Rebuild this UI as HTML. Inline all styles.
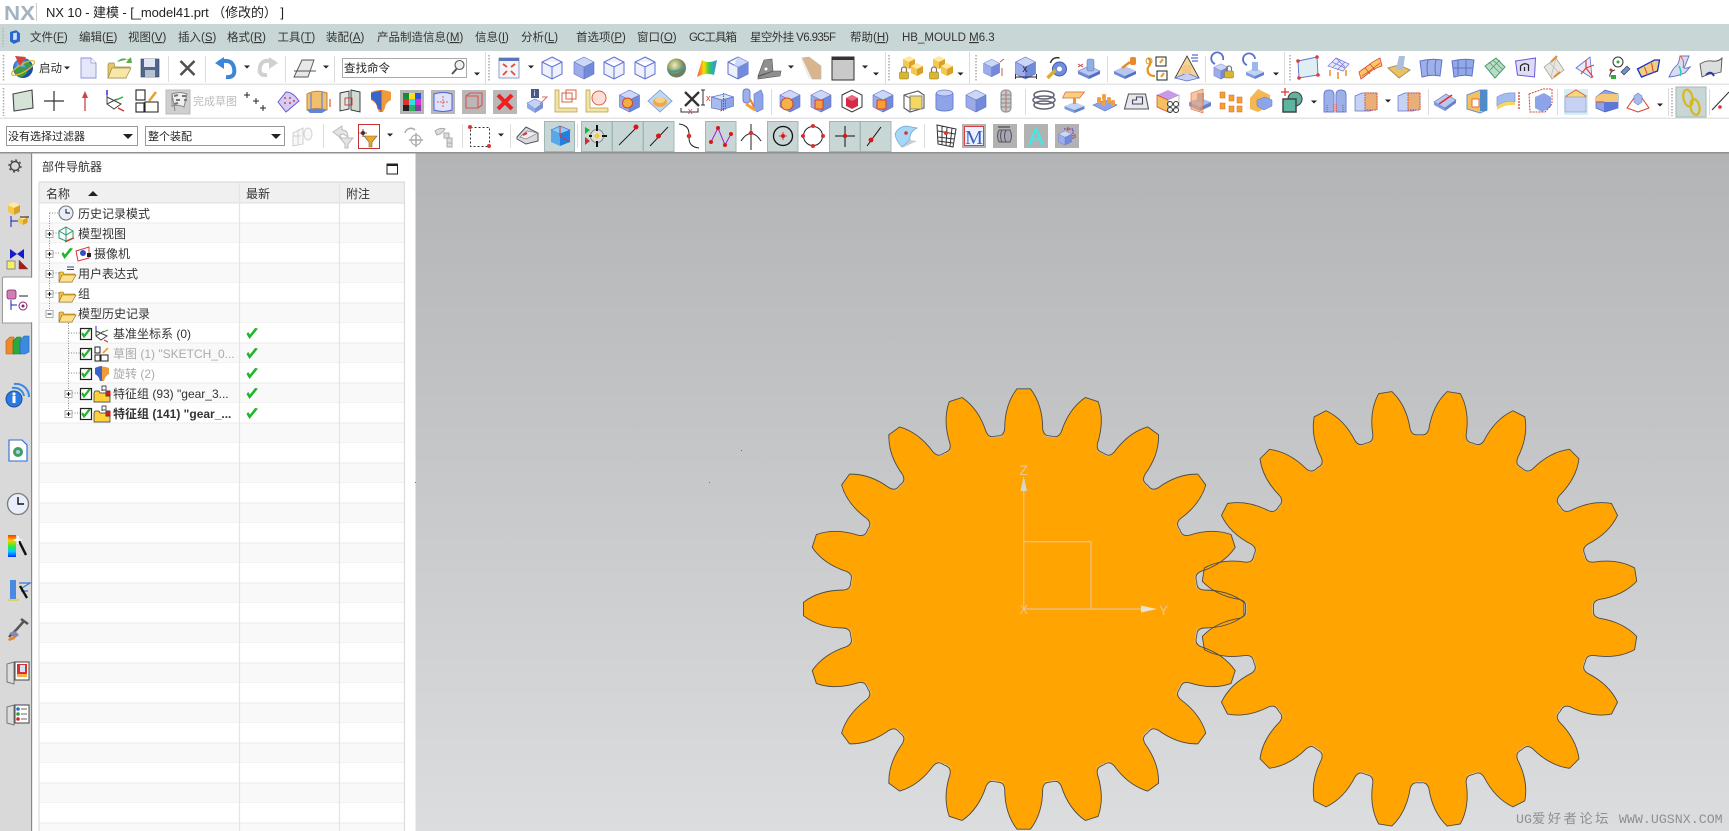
<!DOCTYPE html>
<html lang="zh"><head><meta charset="utf-8"><title>NX 10</title>
<style>
html,body{margin:0;padding:0;width:1729px;height:831px;overflow:hidden;background:#fff}
svg{display:block;font-family:"Liberation Sans","Noto Sans CJK SC",sans-serif}
.m{font-size:11.5px;fill:#333}
.t{font-size:12px;fill:#333}
.g{fill:#aaa}
</style></head><body>
<svg width="1729" height="831" viewBox="0 0 1729 831" xmlns="http://www.w3.org/2000/svg">
<defs>
<linearGradient id="vp" x1="0" y1="0" x2="0" y2="1"><stop offset="0" stop-color="#b3b4b6"/><stop offset="1" stop-color="#dcddde"/></linearGradient>
<linearGradient id="rb" x1="0" y1="0" x2="1" y2="0"><stop offset="0" stop-color="#f44"/><stop offset=".35" stop-color="#fd0"/><stop offset=".6" stop-color="#3c5"/><stop offset="1" stop-color="#38f"/></linearGradient>
<linearGradient id="rbv" x1="0" y1="0" x2="0" y2="1"><stop offset="0" stop-color="#f30"/><stop offset=".25" stop-color="#fc0"/><stop offset=".5" stop-color="#3e3"/><stop offset=".75" stop-color="#0cf"/><stop offset="1" stop-color="#03f"/></linearGradient>
<radialGradient id="sp" cx=".4" cy=".35"><stop offset="0" stop-color="#efe9c8"/><stop offset=".6" stop-color="#9fae6a"/><stop offset="1" stop-color="#6f7d60"/></radialGradient>
<radialGradient id="ea" cx=".4" cy=".35"><stop offset="0" stop-color="#7fc8f5"/><stop offset=".7" stop-color="#2a74d0"/><stop offset="1" stop-color="#1d4fa8"/></radialGradient>
<g id="c"><polygon points="0,-11 10,-6 0,-1 -10,-6" fill="#ccd6f5"/><polygon points="-10,-6 0,-1 0,11 -10,6" fill="#9bace9"/><polygon points="10,-6 0,-1 0,11 10,6" fill="#7389da"/><path d="M0-11 10-6V6L0 11-10 6V-6ZM-10-6 0-1 10-6M0-1V11" fill="none" stroke="#5f73c8" stroke-width=".6"/></g>
<g id="w"><path d="M0-11 10-6V6L0 11-10 6V-6ZM-10-6 0-1 10-6M0-1V11" fill="#eef0fb" stroke="#5a6fd0" stroke-width="1"/></g>
<polygon id="dd" points="-3,-1.5 3,-1.5 0,1.5" fill="#222"/>
<path id="sf" d="M-11-7Q0-10 11-8L9 8Q0 6-9 9Z"/>
<path id="pl" d="M-10-7 9-11 10 7-9 10Z"/>
<g id="y"><polygon points="-6,-6 0,-9 6,-6 0,-3" fill="#ffe9a0"/><polygon points="-6,-6 0,-3 0,4 -6,1" fill="#f5c84b"/><polygon points="6,-6 0,-3 0,4 6,1" fill="#d9a02a"/></g>
<g id="lk"><rect x="-4.5" y="-2" width="9" height="7" rx="1" fill="#d8b62f" stroke="#8a7320" stroke-width=".5"/><path d="M-2.5-2V-4.5A2.5 2.5 0 0 1 2.5-4.5V-2" fill="none" stroke="#777" stroke-width="1.2"/></g>
<path id="ck" d="M-5.5 0-2.5 5 6-5.5 3-6-2 .5-3.8-2Z" fill="#1fb52d"/>
<g id="cb"><rect x="-5.5" y="-5.5" width="11" height="11" fill="#fff" stroke="#222" stroke-width="1.2"/><use href="#ck" transform="scale(.85)"/></g>
<g id="fo"><path d="M-8-2V7H5L8-1H-3L-4-3H-7Z" fill="#f5c23f" stroke="#8b6414" stroke-width=".6"/><path d="M-8 7-5 0H9L5 7Z" fill="#ffe08a" stroke="#8b6414" stroke-width=".6"/></g>
<g id="pb"><rect x="-3.5" y="-3.5" width="7" height="7" fill="#fff" stroke="#999" stroke-width=".8"/><path d="M-2 0H2M0-2V2" stroke="#111" stroke-width="1"/></g>
<g id="mb"><rect x="-3.5" y="-3.5" width="7" height="7" fill="#fff" stroke="#999" stroke-width=".8"/><path d="M-2 0H2" stroke="#111" stroke-width="1"/></g>
<g id="fg"><path d="M-8-2V7H8V-2H-2L-3-4H-7Z" fill="#ffd23c" stroke="#333" stroke-width=".7"/><path d="M0-4V-9H4V-5H0M4-4H8V1H4Z" fill="#fff" stroke="#111" stroke-width=".7"/><rect x="4.5" y="-3.5" width="4" height="4" fill="#e11"/></g>
<path id="tooth" d="M-27.4-173C-22.500-173-19.800-174.500-19-180C-19-192-17-207-6.700-220.200L6.700-220.200C17-207 19-192 19-180C19.800-174.500 22.500-173 27.400-173"/>
<g id="teeth"><use href="#tooth"/><use href="#tooth" transform="rotate(18)"/><use href="#tooth" transform="rotate(36)"/><use href="#tooth" transform="rotate(54)"/><use href="#tooth" transform="rotate(72)"/><use href="#tooth" transform="rotate(90)"/><use href="#tooth" transform="rotate(108)"/><use href="#tooth" transform="rotate(126)"/><use href="#tooth" transform="rotate(144)"/><use href="#tooth" transform="rotate(162)"/><use href="#tooth" transform="rotate(180)"/><use href="#tooth" transform="rotate(198)"/><use href="#tooth" transform="rotate(216)"/><use href="#tooth" transform="rotate(234)"/><use href="#tooth" transform="rotate(252)"/><use href="#tooth" transform="rotate(270)"/><use href="#tooth" transform="rotate(288)"/><use href="#tooth" transform="rotate(306)"/><use href="#tooth" transform="rotate(324)"/><use href="#tooth" transform="rotate(342)"/></g>
<pattern id="rows" x="39" y="203" width="366" height="40" patternUnits="userSpaceOnUse"><rect width="366" height="40" fill="#fff"/><rect y="20" width="366" height="20" fill="#f9f9f9"/><rect y="19.5" width="366" height="1" fill="#ebebeb"/><rect y="39.5" width="366" height="1" fill="#ebebeb"/></pattern>
</defs>

<!-- title / menu -->
<rect width="1729" height="153" fill="#fff"/>
<text x="4" y="20" font-size="20" font-weight="700" fill="#a4b3bf" textLength="31" lengthAdjust="spacingAndGlyphs">NX</text>
<rect x="36" y="3" width="1" height="18" fill="#ccc"/>
<text x="46" y="17" font-size="13" fill="#222" textLength="238">NX 10 - 建模 - [_model41.prt （修改的） ]</text>
<rect y="24" width="1729" height="27" fill="#c8d7d5"/>
<path d="M3 28V47" stroke="#98a8a8" stroke-dasharray="1.5 1.5" fill="none"/>
<g transform="translate(15,37) scale(.62)"><polygon points="-8,-8 2,-11 8,-6 8,7 -2,11 -8,7" fill="#2b66c9"/><polygon points="-3,-6 3,-7 3,4 -3,5" fill="#cfe0fa"/></g>
<g class="m">
<text class="m" x="30" y="41">文件(<tspan text-decoration="underline">F</tspan>)</text>
<text class="m" x="79" y="41">编辑(<tspan text-decoration="underline">E</tspan>)</text>
<text class="m" x="128" y="41">视图(<tspan text-decoration="underline">V</tspan>)</text>
<text class="m" x="178" y="41">插入(<tspan text-decoration="underline">S</tspan>)</text>
<text class="m" x="227" y="41">格式(<tspan text-decoration="underline">R</tspan>)</text>
<text class="m" x="277.5" y="41">工具(<tspan text-decoration="underline">T</tspan>)</text>
<text class="m" x="326" y="41">装配(<tspan text-decoration="underline">A</tspan>)</text>
<text class="m" x="377" y="41">产品制造信息(<tspan text-decoration="underline">M</tspan>)</text>
<text class="m" x="475" y="41">信息(<tspan text-decoration="underline">I</tspan>)</text>
<text class="m" x="521" y="41">分析(<tspan text-decoration="underline">L</tspan>)</text>
<text class="m" x="576" y="41">首选项(<tspan text-decoration="underline">P</tspan>)</text>
<text class="m" x="637" y="41">窗口(<tspan text-decoration="underline">O</tspan>)</text>
<text class="m" x="689" y="41" textLength="48">GC工具箱</text>
<text class="m" x="750" y="41" textLength="86">星空外挂 V6.935F</text>
<text class="m" x="850" y="41">帮助(<tspan text-decoration="underline">H</tspan>)</text>
<text class="m" x="902" y="41">HB_MOULD <tspan text-decoration="underline">M</tspan>6.3</text>
</g>

<!-- row separators -->
<rect y="83.5" width="1729" height="1.5" fill="#e4e4e4"/>
<rect y="117.5" width="1729" height="1.5" fill="#e4e4e4"/>
<path d="M3.5 55V82M3.5 88V116M489 55V82M889 55V82M976 55V82M1290 55V82M1672 88V116" stroke="#a8a8a8" stroke-width="1.5" stroke-dasharray="1.5 1.5" fill="none"/>
<path d="M168.500 56V82M205.500 56V82M285.500 56V82M334.500 56V82M485.500 52V84M885.500 52V84M969.500 52V84M1107.500 56V82M1205.500 56V82M1284.500 52V84M771.500 89V115M1025.500 89V115M1428.500 89V115M1557.500 89V115M1668.500 88V116M1709.500 89V115M323.500 124V148M462.500 124V148M510.500 124V148M577.500 124V148M924.500 124V148" stroke="#dcdcdc" stroke-width="1"/>

<!-- row 1 -->
<g transform="translate(23,68)"><circle r="10" fill="url(#ea)"/><path d="M-9 3Q-4-4 2 0T-1 9Q-7 9-9 3ZM3-8 9-3 5 1 1-3Z" fill="#3f9b3f"/><ellipse rx="13" ry="4" transform="rotate(-30)" fill="none" stroke="#e8b830" stroke-width="1.3"/><polygon points="-8,-12 3,-11 -3,-2" fill="#d8403a"/></g>
<text class="m" x="39" y="72">启动</text><use href="#dd" x="67" y="68"/>
<g transform="translate(88,68)"><path d="M-7-10H3L8-5V10H-7Z" fill="#e4e6fa" stroke="#8d95d6" stroke-width=".9"/><path d="M3-10V-5H8" fill="#fff" stroke="#8d95d6" stroke-width=".8"/></g>
<g transform="translate(119,68)"><path d="M-11-3V10H7L11-1H-4L-5-5H-10Z" fill="#e6c66b" stroke="#a08a3c" stroke-width=".7"/><path d="M-11 10-7 0H12L7 10Z" fill="#f6e6a8" stroke="#a08a3c" stroke-width=".7"/><path d="M-2-6Q3-12 9-8L7-5 13-5 12-11 10-9" fill="#5fae4a"/></g>
<g transform="translate(150,68)"><rect x="-9" y="-9" width="18" height="18" fill="#4f668f" stroke="#2f3f60" stroke-width=".6"/><rect x="-6" y="-9" width="11" height="8" fill="#dfe6f3"/><rect x="-5" y="2" width="10" height="7" fill="#b7c0cf"/></g>
<path d="M180.500 61 194.500 75M194.500 61 180.500 75" stroke="#505050" stroke-width="2.6"/>
<g fill="none" stroke-width="4"><path d="M219 62Q232 58 234 68T226 77" stroke="#3c86d6"/><path d="M274 62Q262 58 260 67T267 75" stroke="#d0d0d0"/></g>
<polygon points="215,63 224,57 224,69" fill="#3c86d6"/><polygon points="278,63 269,57 269,69" fill="#d0d0d0"/>
<use href="#dd" x="247" y="67"/>
<g transform="translate(305,68)" stroke="#555" stroke-width=".9" fill="#e8e8e8"><path d="M-11 9-3-8H9L3 9Z"/><path d="M-11 3H11" fill="none"/></g><use href="#dd" x="326" y="67"/>
<rect x="342.500" y="58.500" width="124" height="19" fill="#fff" stroke="#aaa"/>
<text x="344" y="72" font-size="11.500" fill="#222">查找命令</text>
<g transform="translate(458,67)" fill="none" stroke="#555"><circle cx="1.500" cy="-2" r="4.500" fill="#eee" stroke-width="1.100"/><path d="M-1.500 2-6 7" stroke-width="2"/></g>
<use href="#dd" x="477" y="74"/>
<g transform="translate(509,68)"><rect x="-10" y="-10" width="20" height="20" fill="#f3f5fb" stroke="#8da0c8"/><rect x="-10" y="-10" width="20" height="3" fill="#5876c0"/><path d="M-6-4-2-1M6-4 2-1M-6 7-2 3M6 7 2 3" stroke="#e05030" stroke-width="1.800"/></g><use href="#dd" x="531" y="67"/>
<use href="#w" x="552" y="68"/><use href="#c" x="584" y="68"/><use href="#w" x="614" y="68"/><use href="#w" x="645" y="68"/>
<circle cx="676.500" cy="68" r="9.500" fill="url(#sp)"/><path d="M668 70Q675 74 685 67" stroke="#3d9ea0" stroke-width="2" fill="none"/>
<path d="M697 77 702 60Q708 64 717 60L714 75Q705 72 697 77Z" fill="url(#rb)"/>
<g transform="translate(738,68)"><use href="#w"/><polygon points="0,-1 10,-6 10,6 0,11" fill="#7389da"/><polygon points="0,-11 10,-6 0,-1 -4,-3" fill="#ccd6f5"/></g>
<g transform="translate(769,68)"><path d="M-11 8-5-8 3-9 4 3-11 9ZM4 3 12 3 11 8-11 11-11 8Z" fill="#8f8f8f" stroke="#555" stroke-width=".6"/><circle cx="-3" cy="1" r="1.500" fill="#fff"/></g><use href="#dd" x="791" y="67"/>
<g transform="translate(812,68)"><polygon points="-10,-10 -3,-11 9,-2 9,11 0,11" fill="#d8b58a" stroke="#bbb" stroke-width=".7"/><polygon points="-10,-10 0,11 -3,11 -11,-8" fill="#eee"/></g>
<rect x="832" y="57" width="22" height="23" fill="#c9c9c9" stroke="#333"/><rect x="832" y="57" width="22" height="3" fill="#333"/><use href="#dd" x="865" y="67"/><use href="#dd" x="876" y="74"/>
<g transform="translate(909,68)"><use href="#y" y="-3"/><use href="#y" x="8" y="4"/><use href="#lk" x="-5" y="6"/></g>
<g transform="translate(939,68)"><use href="#y" y="-3"/><use href="#y" x="8" y="4"/><use href="#lk" x="-5" y="6"/></g><use href="#dd" x="960.500" y="74"/>
<g transform="translate(994,68)"><use href="#c" transform="scale(.8)" x="-3"/><path d="M6-6 10-9M8 0V8" stroke="#c55" stroke-width="1" fill="none"/></g>
<g transform="translate(1025.500,68)"><use href="#c"/><path d="M-10 9H11M-10 6V11M11 6V11" stroke="#222" fill="none" stroke-width=".9"/><text x="-3" y="4" font-size="10" fill="#223">x</text></g>
<g transform="translate(1056.500,68)"><circle cx="3" cy="1" r="7" fill="#6f8ed8" stroke="#3f5ab0"/><circle cx="3" cy="1" r="2.500" fill="#fff"/><path d="M-9 10-1 2" stroke="#d8b030" stroke-width="3.500"/><path d="M-6-5A7 7 0 0 1 3-10" stroke="#333" fill="none" stroke-width="1.500"/></g>
<g transform="translate(1089,68)"><polygon points="-11,3 0,-2 11,3 0,8" fill="#b9c6ee" stroke="#6d82d4" stroke-width=".6"/><polygon points="-11,3 0,8 0,11 -11,6" fill="#6e8ad6"/><polygon points="11,3 0,8 0,11 11,6" fill="#4f6fc4"/><rect x="-2" y="-9" width="7" height="12" rx="2" fill="#8fb0e4" stroke="#5b7cc8" stroke-width=".6"/><path d="M-11-4-6-1M-11-1-6-4" stroke="#c44"/></g>
<g transform="translate(1125,68)"><polygon points="-11,3 0,-2 11,3 0,8" fill="#b9c6ee"/><polygon points="-11,3 0,8 0,11 -11,6" fill="#6e8ad6"/><polygon points="11,3 0,8 0,11 11,6" fill="#4f6fc4"/><path d="M-3 0 5-6" stroke="#e88a2a" stroke-width="2.500"/><rect x="5" y="-11" width="6" height="8" rx="2" fill="#e88a2a"/></g>
<g transform="translate(1155,68)"><rect x="1" y="-11" width="10" height="9" fill="#fff" stroke="#222"/><rect x="2" y="3" width="10" height="9" fill="#fff" stroke="#222"/><path d="M-7-10A4 5 0 0 1-7-1M-7-1Q-9 8 0 8" fill="none" stroke="#e89020" stroke-width="2.200"/><path d="M8-9 5-5M9 5 6 9" stroke="#d8a030" stroke-width="2"/><circle cx="-6" cy="-7" r="3" fill="none" stroke="#c8a030"/></g>
<g transform="translate(1187,68)"><polygon points="0,-12 12,10 -12,10" fill="#f4d49a" stroke="#333" stroke-width=".8"/><polygon points="-12,10 0,5 12,10 0,13" fill="#c7d0f0" stroke="#5a6fd0" stroke-width=".7"/><rect x="-5" y="-3" width="9" height="9" fill="#f3c885"/><path d="M4-10H11M5-7H11M5-13H11" stroke="#3344bb" stroke-width=".9"/></g>
<g transform="translate(1223,68)"><use href="#c" transform="scale(.7)" x="-3" y="5"/><path d="M-8-4A6 6 0 1 1 0-8" fill="none" stroke="#5a6fd0" stroke-width="1.800"/><use href="#lk" x="6" y="5"/></g>
<g transform="translate(1255,68)"><polygon points="-9,4 0,0 9,4 0,8" fill="#c3d3f2"/><polygon points="-9,4 0,8 0,11 -9,7" fill="#7f9ade"/><polygon points="9,4 0,8 0,11 9,7" fill="#6283cc"/><rect x="-3" y="-6" width="6" height="9" fill="#9db8e8"/><path d="M-8-3A6 6 0 1 1 0-9" fill="none" stroke="#5a6fd0" stroke-width="1.800"/></g><use href="#dd" x="1276" y="74"/>
<g transform="translate(1308,68)"><use href="#pl" fill="#dfeef3" stroke="#5a6fd0" stroke-width=".9"/><g fill="#d8403a"><circle cx="-10" cy="-7" r="1.800"/><circle cx="9" cy="-11" r="1.800"/><circle cx="10" cy="7" r="1.800"/><circle cx="-9" cy="10" r="1.800"/></g></g>
<g transform="translate(1338,68)"><path d="M-10-2-2-10 11-4 5 3ZM-6-6 7 0M-2-10 7-1M3-8-5-1M7-6-1 2" fill="#e8e8fb" stroke="#7a7fe0" stroke-width=".8"/><path d="M-8 2V8M0 4V11M8 2V8" stroke="#e89020" stroke-width="1.500"/></g>
<g transform="translate(1370,68)"><path d="M-11 4Q-4-1 0-4T10-10L12-2Q5 0 0 4T-9 11Z" fill="#f8c86a" stroke="#e0503a" stroke-width=".9"/><path d="M-8 8Q0 3 10-5M-5 0 0 6M0-4 5 2" stroke="#d04030" fill="none" stroke-width=".7"/></g>
<g transform="translate(1399,68)"><polygon points="-11,0 0,-3 11,2 0,10" fill="#e9c264" stroke="#a89060"/><polygon points="0,-12 6,-12 4,2 -3,2" fill="#aac0d8"/></g>
<use href="#sf" x="1431" y="68" fill="#9db0e8" stroke="#5f73c8"/><path d="M1428 60Q1426 68 1428 76M1436 60Q1434 68 1436 75" stroke="#5f73c8" fill="none"/>
<use href="#sf" x="1463" y="68" fill="#93a8e6" stroke="#5f73c8"/><path d="M1458 60V75M1466 60V75M1453 68H1473" stroke="#5f73c8" fill="none"/>
<path d="M1485 66 1496 58 1505 67 1495 78Z" fill="#b8dcc4" stroke="#4a9a70"/><path d="M1489 62 1500 73M1493 60 1503 70M1490 70 1500 60" stroke="#4a9a70" stroke-width=".7"/>
<g transform="translate(1525.500,68)"><path d="M-10-7 10-10 9 9-8 7Z" fill="#dcdcf8" stroke="#6a5ad8"/><path d="M-5 3V-2Q-1-6 3-3V3M-1 3V-1" fill="none" stroke="#222" stroke-width="1.200"/></g>
<g transform="translate(1554,68)"><polygon points="-10,-1 2,-10 10,2 -2,11" fill="#e8e6e0" stroke="#999" stroke-width=".7"/><path d="M-9 0-3 9M2-10 -3 9M-4-5 6 6" stroke="#bbb" stroke-width=".7"/><path d="M-3-6 3-12M0 9 6 4" stroke="#e88a2a" stroke-width="2"/></g>
<g transform="translate(1586,68)"><polygon points="-10,0 4,-11 6,10" fill="#e8eaf6" stroke="#5a6fd0" stroke-width=".8"/><path d="M0 0V-8M0 0 8 -3M0 0-5 6M0 0 7 9" stroke="#d8403a" stroke-width="1.200"/></g>
<g transform="translate(1618,68)"><circle cx="0" cy="-6" r="5" fill="#fff" stroke="#333"/><circle cy="-6" r="1.500" fill="#3a3"/><path d="M-8 9A6 6 0 0 1-3 2" fill="none" stroke="#333"/><circle cx="-7" cy="2" r="1.500" fill="#d33"/><polygon points="3,4 9,-2 12,1 6,7" fill="#6f8ed8" stroke="#333" stroke-width=".6"/><rect x="-7" y="7" width="5" height="4" fill="#3a3"/></g>
<g transform="translate(1648.500,68)"><polygon points="-11,1 6,-8 11,-8 9,3 -7,9" fill="#f0d080" stroke="#1a30c0" stroke-width="1.300"/><path d="M-4-1-1 7M3-5 5 5" stroke="#d8403a"/></g>
<g transform="translate(1680,68)"><path d="M-11 9Q-7 0-4-2T0-12H9L5-2Q2 2 10-1L5 5-4 8Z" fill="#d8dcf0" stroke="#6a78c8"/><path d="M-1-2Q2 4 0 8" stroke="#3cb" fill="none" stroke-width="1.500"/><path d="M0-12Q5-8 3 0" stroke="#e06050" fill="none"/></g>
<g transform="translate(1711,68)"><path d="M-11-4Q-5-8 1-7T11-10L10 4Q4 6-2 6L-9 9Z" fill="#ddd" stroke="#555" stroke-width=".9"/><path d="M-5 7Q0 2 3 8" stroke="#223ca0" stroke-width="2" fill="none"/></g>

<!-- row 2 -->
<g transform="translate(23,101)"><use href="#pl" fill="#d5e3d7" stroke="#444" stroke-width="1.100"/></g>
<path d="M54 91V111M44 101H64" stroke="#333" stroke-width="1.200"/>
<path d="M85 93V111" stroke="#c44" stroke-width="1.300"/><polygon points="85,91 82,98 88,98" fill="#c44"/>
<g transform="translate(115,101)" fill="none"><path d="M-8-4 6 3-1 8-8 3ZM-8-9V3M-8 3 2-2" stroke="#444"/><path d="M-8-11V-6" stroke="#22c" stroke-width="1.400"/><path d="M1-1 8-4" stroke="#3a3" stroke-width="1.400"/><path d="M3 7 9 10" stroke="#c33" stroke-width="1.400"/></g>
<g transform="translate(147,101)" fill="#fff" stroke="#222" stroke-width="1.100"><rect x="-11" y="-11" width="9" height="10"/><rect x="-11" y="2" width="8" height="9"/><path d="M-2 11V1H11V11Z"/><path d="M2 0 9-9" stroke="#e8a030" stroke-width="2.500"/></g>
<rect x="166" y="90" width="24" height="24" fill="#cfcfcf" stroke="#bbb"/><path d="M172 94Q180 91 187 94L184 107Q178 104 172 106Z" fill="#eee" stroke="#888"/><path d="M174 96 178 95M182 96 186 96M176 100H180M184 100H187M174 104 178 103" stroke="#777" stroke-width="2"/><path d="M172 94 175 111" stroke="#888"/>
<text x="193" y="105" font-size="11" fill="#bbb">完成草图</text>
<path d="M247 92V98M244 95H250M256 98V104M253 101H259M263 105V111M260 108H266" stroke="#222" fill="none"/>
<g transform="translate(288,101)"><path d="M-10 1-2-9Q5-9 11 0-2 11-2 11Z" fill="#d3ccf4" stroke="#6a5ad8"/><g fill="#d8403a"><circle cx="-3" cy="-3" r="1"/><circle cx="2" cy="-3" r="1"/><circle cx="-3" cy="2" r="1"/><circle cx="2" cy="2" r="1"/><circle cx="6" cy="0" r="1"/></g></g>
<g transform="translate(318,101)"><path d="M-11-7Q-2-12 9-8V9Q-2 6-11 9Z" fill="#f2bf6a" stroke="#c9802a"/><path d="M-7-8V8M4-9V8" stroke="#6f8ed8" stroke-width="1.400"/><path d="M-11 9Q-2 6 9 9L4 12H-8Z" fill="#5f84d8"/><path d="M12-2V6" stroke="#c33"/></g>
<g transform="translate(350,101)" stroke="#333" stroke-width=".9"><path d="M-10-8-1-10V8L-10 10Z" fill="#dfe8e2"/><path d="M1-11 10-9V11L1 9Z" fill="#cfdad2"/><rect x="-5" y="-3" width="7" height="7" fill="none" stroke="#c33"/></g>
<g transform="translate(381,101)"><path d="M-10-9Q0-13 10-9V-1Q4 2 4 7L2 11H-2L-4 7Q-4 2-10-1Z" fill="#f09a3a"/><path d="M0-11V11" stroke="#c33"/><path d="M-10-8Q-5-10 0-10V9L-3 8Q-4 1-10-2Z" fill="#3a64c8"/></g>
<rect x="400" y="90" width="24" height="24" fill="#b5b5b5"/><g stroke="none"><rect x="403" y="93" width="6" height="6" fill="#1a8a3a"/><rect x="409" y="93" width="6" height="6" fill="#ffe020"/><rect x="415" y="93" width="6" height="6" fill="#3050e0"/><rect x="403" y="99" width="6" height="6" fill="#e03030"/><rect x="409" y="99" width="6" height="6" fill="#30e0e0"/><rect x="415" y="99" width="6" height="6" fill="#e030d0"/><rect x="403" y="105" width="6" height="6" fill="#222"/><rect x="409" y="105" width="6" height="6" fill="#30b060"/><rect x="415" y="105" width="6" height="6" fill="#8040a0"/></g>
<rect x="431" y="90" width="24" height="24" fill="#b8b8b8"/><path d="M434 94Q443 91 452 94V110Q443 113 434 110Z" fill="#dfe4fa" stroke="#5060e0"/><path d="M437 102H449M443 96V108" stroke="#e06060" stroke-dasharray="2 1"/>
<rect x="462" y="90" width="24" height="24" fill="#b8b8b8"/><path d="M466 96H478V108H466ZM466 96 470 93H482V105L478 108" fill="none" stroke="#e05050" stroke-width="1.100"/>
<rect x="493" y="90" width="24" height="24" fill="#b8b8b8"/><path d="M498 95 512 109M512 95 498 109" stroke="#ee2020" stroke-width="4"/>
<g transform="translate(535,101)"><polygon points="-8,2 0,-2 8,2 0,8" fill="#c3d3f2" stroke="#6d82d4" stroke-width=".6"/><polygon points="-8,2 0,8 0,12 -8,7" fill="#90a8e6"/><polygon points="8,2 0,8 0,12 8,7" fill="#7590d8"/><rect x="-4" y="-12" width="8" height="9" fill="#4a5888"/><text x="-1.500" y="-5" font-size="8" fill="#fff">i</text><path d="M5 3 12-4H7" stroke="#d66" fill="none"/></g>
<g transform="translate(566,101)"><path d="M-11-11H-7V7H11V11H-11Z" fill="#f0e4a8" stroke="#b89840" stroke-width=".7"/><rect x="-4" y="-8" width="10" height="9" fill="none" stroke="#d86040"/><rect x="0" y="-11" width="10" height="9" fill="none" stroke="#d86040"/></g>
<g transform="translate(597,101)"><path d="M-11-11H-7V7H11V11H-11Z" fill="#f0e4a8" stroke="#b89840" stroke-width=".7"/><circle cx="2" cy="-3" r="7" fill="#fce0d8" stroke="#d86040"/></g>
<g transform="translate(629.500,101)"><use href="#c"/><circle cx="-2" cy="2" r="5" fill="#f0b040" stroke="#d84030"/></g>
<g transform="translate(660,101)"><polygon points="-12,0 0,-11 12,0 0,11" fill="#c0d8f4" stroke="#88a8d8"/><ellipse cy="1" rx="7" ry="5" fill="#f0a848"/><ellipse cy="-1" rx="5" ry="3" fill="#f8d088"/></g>
<g transform="translate(692,101)"><path d="M-7-9 7 5M7-9-7 5" stroke="#333" stroke-width="2.300"/><path d="M-11 7V11H6V7" fill="none" stroke="#333"/><path d="M9-11H13M11-11V4M9 4H13" stroke="#333" fill="none"/><text x="-4" y="13" font-size="9" fill="#d33">x</text><text x="10" y="0" font-size="9" fill="#d33" transform="translate(4 0)">x</text></g>
<g transform="translate(722.500,101)"><polygon points="-11,-4 2,-7 11,-4 -1,-1" fill="#dce4f8" stroke="#5f73c8" stroke-width=".7"/><polygon points="-11,-4 -1,-1 -1,9 -11,7" fill="#a9bbee" stroke="#5f73c8" stroke-width=".7"/><polygon points="11,-4 -1,-1 -1,9 11,5" fill="#8ea4e8" stroke="#5f73c8" stroke-width=".7"/><path d="M1-8V10M-2 10 3 8V-2" stroke="#d33" stroke-dasharray="1.500 1" fill="none"/></g>
<g transform="translate(753,101)"><rect x="-10" y="-12" width="7" height="14" rx="3" fill="#9db0e8" stroke="#6a7fd4"/><path d="M-3-2 1 6" stroke="#f08030" stroke-width="2"/><polygon points="1,-7 8,-11 10,-6 10,8 4,11 1,8" fill="#8ea4e8" stroke="#6a7fd4" stroke-width=".7"/><path d="M-7 3 2 9" stroke="#f5a030" stroke-width="3"/></g>
<g transform="translate(790,101)"><use href="#c"/><circle cx="-3" cy="3" r="6" fill="#f3b34a" stroke="#d84030"/></g>
<g transform="translate(821,101)"><use href="#c"/><rect x="-6" y="-1" width="8" height="9" fill="#f0a040" stroke="#d84030"/></g>
<g transform="translate(852,101)"><path d="M-10-6 0-11 10-6V6L0 11-10 6Z" fill="#fff" stroke="#333"/><polygon points="-6,-3 0,-6 6,-3 6,5 0,8 -6,5" fill="#d82848"/><polygon points="-6,-3 0,-6 6,-3 0,0" fill="#e86880"/></g>
<g transform="translate(883,101)"><use href="#c"/><rect x="-6" y="-1" width="9" height="9" rx="1" fill="#f5a030" stroke="#d84030"/></g>
<g transform="translate(914,101)"><path d="M-10-6 4-10 10-6 10 7-4 11-10 7Z" fill="#fff" stroke="#555" stroke-width="1.100"/><rect x="-4" y="-5" width="12" height="13" fill="#f5d860" stroke="#888"/><path d="M-10-6-4-3V11" stroke="#666" fill="none"/></g>
<g transform="translate(944,101)"><rect x="-8" y="-10" width="17" height="20" rx="8" ry="3" fill="#8ea4e8" stroke="#6a7fd4"/><ellipse cy="-8" cx=".5" rx="8" ry="3" fill="#c6d2f4" stroke="#6a7fd4" stroke-width=".7"/></g>
<use href="#c" x="976" y="101"/>
<rect x="1001" y="90" width="10" height="22" rx="4" fill="#c8c8c8" stroke="#888"/><path d="M1001 95H1011M1001 99H1011M1001 103H1011M1001 107H1011M1006 90V112" stroke="#777" fill="none" stroke-width=".8"/><path d="M1006 90V112" stroke="#d66" stroke-dasharray="2 2"/>
<g transform="translate(1044,101)" fill="none" stroke="#667"><ellipse cy="-6" rx="10" ry="4" stroke-width="1.600"/><ellipse cy="-1" rx="11" ry="4" stroke-width="1.600"/><ellipse cy="4" rx="10" ry="4" stroke-width="1.600"/></g>
<g transform="translate(1074.500,101)"><polygon points="-9,-9 10,-9 5,-3 -12,-3" fill="#f8d080" stroke="#e06040" stroke-width=".7"/><polygon points="-10,5 0,1 10,5 0,9" fill="#c3d3f2"/><polygon points="-10,5 0,9 0,12 -10,8" fill="#7f9ade"/><polygon points="10,5 0,9 0,12 10,8" fill="#6283cc"/><path d="M0 3V-3" stroke="#f09030" stroke-width="3"/></g>
<g transform="translate(1105,101)"><polygon points="-12,4 0,-1 12,4 0,10" fill="#8ea4e8" stroke="#5f73c8" stroke-width=".6"/><g fill="#f0a040"><rect x="-8" y="-4" width="4" height="6" rx="1.500"/><rect x="-3" y="-7" width="4" height="6" rx="1.500"/><rect x="2" y="-4" width="4" height="6" rx="1.500"/><rect x="-3" y="-1" width="4" height="6" rx="1.500"/><rect x="6" y="-1" width="4" height="6" rx="1.500"/></g></g>
<g transform="translate(1136.500,101)"><path d="M-8-7H9L12 8H-12Z" fill="#e8e8e8" stroke="#556" stroke-width="1.100"/><path d="M-4 3V-1H0V-4H6V3Z" fill="none" stroke="#446" stroke-width="1.100"/></g>
<g transform="translate(1168,101)"><polygon points="-11,-6 0,-11 11,-6 0,-1" fill="#c89ae8"/><polygon points="-11,-6 0,-1 0,11 -11,6" fill="#f5c060" stroke="#d84030" stroke-width=".7"/><polygon points="11,-6 0,-1 0,11 11,6" fill="#fff" stroke="#999" stroke-width=".6"/><g fill="none" stroke="#333"><circle cx="2" cy="3" r="2.500"/><circle cx="8" cy="3" r="2.500"/><circle cx="2" cy="9" r="2.500"/><circle cx="8" cy="9" r="2.500"/></g></g>
<g transform="translate(1200,101)"><polygon points="-11,1 0,-3 11,1 0,6" fill="#a5bcee"/><polygon points="-11,1 0,6 0,10 -11,5" fill="#7f9ade"/><polygon points="11,1 0,6 0,10 11,5" fill="#6283cc"/><rect x="-3" y="-8" width="7" height="9" fill="#8fb0e4"/><path d="M-9-8 3-12V12L-9 8Z" fill="#f5a060" fill-opacity=".6" stroke="#e06040" stroke-width=".6"/></g>
<g fill="#f5a030" stroke="#d86030" stroke-width=".5"><rect x="1220" y="92" width="5" height="6"/><rect x="1229" y="95" width="5" height="6"/><rect x="1237" y="97" width="5" height="6"/><rect x="1220" y="103" width="5" height="6"/><rect x="1229" y="106" width="5" height="6"/><rect x="1237" y="106" width="5" height="6"/></g>
<g transform="translate(1261,101)"><polygon points="-3,-12 9,-6 9,5 -3,11 -11,8 -11,-3" fill="#f5b850"/><polygon points="-4,-1 4,-4 11,-1 11,5 3,9 -4,5" fill="#8ea4e8" stroke="#5f73c8" stroke-width=".5"/></g>
<g transform="translate(1292,101)"><path d="M-11-9H-3M-7-13V-5" stroke="#d33" stroke-width="1.200"/><circle cx="3" cy="-2" r="7" fill="#5fb4a0" stroke="#444" stroke-width="1.100"/><rect x="-9" y="-2" width="13" height="13" fill="#5fb4a0" stroke="#444" stroke-width="1.500"/></g><use href="#dd" x="1314" y="102"/>
<g transform="translate(1335,101)"><path d="M-11 11V-6Q-11-11-6-11T-1-6V11ZM1 11V-6Q1-11 6-11T11-6V11Z" fill="#9db0e8" stroke="#6a7fd4"/><path d="M-1 3V11M1 3V11M-8 4V11M8 4V11" stroke="#e03030" stroke-width="1" stroke-dasharray="1 1"/></g>
<g transform="translate(1366,101)"><polygon points="-11,-5 -4,-8 11,-8 11,8 4,10 -11,10" fill="#c6d2f4" stroke="#5f73c8" stroke-width=".7"/><rect x="-1" y="-8" width="12" height="17" fill="#e8b078" stroke="#d84030" stroke-dasharray="1.500 1"/></g><use href="#dd" x="1388" y="101"/>
<g transform="translate(1409,101)"><polygon points="-11,-5 -4,-8 11,-8 11,8 4,10 -11,10" fill="#c6d2f4" stroke="#5f73c8" stroke-width=".7"/><rect x="-1" y="-8" width="12" height="17" fill="#e8b078" stroke="#d84030" stroke-dasharray="1.500 1"/></g>
<g transform="translate(1445,101)"><polygon points="-11,1 1,-7 11,-1 0,7" fill="#b9c6ee" stroke="#5f73c8" stroke-width=".7"/><polygon points="-11,1 0,7 0,10 -11,4" fill="#7f9ade"/><polygon points="11,-1 0,7 0,10 11,2" fill="#6283cc"/><path d="M-6 3 7-6" stroke="#d83030" stroke-width="1.500"/></g>
<g transform="translate(1477,101)"><path d="M-10-6 3-11H10V9L3 12-10 8Z" fill="#f5c060" stroke="#6d90d0"/><path d="M-5-2H2V6H-5Z" fill="#fff" stroke="#e07030"/><rect x="3" y="-11" width="7" height="21" fill="#4f8bc8"/></g>
<g transform="translate(1508,101)"><path d="M-11-4Q-3-9 7-8V1Q-3-1-11 5Z" fill="#a5bcee" stroke="#7a90d8" stroke-width=".7"/><path d="M-11 5Q-3-1 7 1V4Q-3 3-11 9Z" fill="#f5d860"/><path d="M11-9V9" stroke="#d04030" stroke-dasharray="2 1" stroke-width="1.300"/></g>
<g transform="translate(1540,101)"><polygon points="-5,-4 4,-8 11,-4 11,6 2,11 -5,7" fill="#8ea4e8"/><path d="M-11-7 3-12H12V3L5 11-10 11Z" fill="none" stroke="#d84030" stroke-dasharray="2 1"/></g>
<g transform="translate(1576,101)"><rect x="-12" y="-12" width="24" height="26" fill="#bde4ec" fill-opacity=".6"/><polygon points="-10,-5 0,-11 10,-5 0,1" fill="#f8d878" stroke="#e06040"/><rect x="-11" y="-4" width="21" height="15" fill="#c6d2f4" stroke="#8898c8" stroke-width=".6"/></g>
<g transform="translate(1607,101)"><path d="M-11-4-2-11 11-7V7L-2 11-11 7Z" fill="#8ea4e8" stroke="#4b62c0" stroke-width=".7"/><path d="M-11-4Q-6-8-2-7L11-7V1L-3 1H-11Z" fill="#f5c878"/><path d="M-11 1H-3" stroke="#d84030"/><path d="M-3 1-3 11 11 7V1Z" fill="#5f78d8"/></g>
<g transform="translate(1638,101)" fill="none"><path d="M-11 7 -4-3H4L11 7 0 11Z" stroke="#d84030"/><polygon points="-4,-5 0,-8 4,-5 4,1 0,4 -4,1" fill="#a5bcee" stroke="#6d82d4" stroke-width=".6"/></g><use href="#dd" x="1660" y="105"/>
<rect x="1676" y="87" width="30" height="30" fill="#c8d7d5" stroke="#a0b8b5"/>
<g fill="none" stroke="#d8b820" stroke-width="2.200"><ellipse cx="1688" cy="98" rx="4.500" ry="8.500" transform="rotate(-12 1688 98)"/><ellipse cx="1695" cy="107" rx="4.500" ry="8" transform="rotate(-12 1695 107)"/></g>
<path d="M1712 110 1729 92" stroke="#333" stroke-width="1.100"/><circle cx="1720" cy="107" r="1.800" fill="#d33"/>

<!-- row 3 -->
<rect x="6.500" y="126.500" width="131" height="19" fill="#fff" stroke="#999" stroke-width="1"/>
<text x="8" y="140" font-size="11" fill="#222">没有选择过滤器</text><polygon points="125,134 135,134 130,139" fill="#222" transform="translate(-2 0)"/>
<rect x="145.500" y="126.500" width="139" height="19" fill="#fff" stroke="#999" stroke-width="1"/>
<text x="148" y="140" font-size="11" fill="#222">整个装配</text><polygon points="271,134 281,134 276,139" fill="#222"/>
<g opacity=".55"><g transform="translate(303,136)" fill="#f4f4f4" stroke="#aaa"><path d="M-10-3 0-8V8L-10 10Z"/><ellipse cx="5" cy="-2" rx="4" ry="6"/><path d="M-2 0H-10M-5-6V8"/></g></g>
<g transform="translate(342,136)" stroke="#bbb" fill="#e4e4e4"><path d="M-9-4 0-10V-6Q6-6 6 1L1-2Q0-2-2-1L-1 2Z"/><path d="M-2 2H11L6 8V12H3V8Z"/></g>
<rect x="358.500" y="124.500" width="21" height="24" fill="#fff" stroke="#c83030"/><path d="M363 129V137M359.500 133H367" stroke="#c33" stroke-width="1.100"/><circle cx="363" cy="133" r="2" fill="#333"/><path d="M364 136H377L372 142V147H369V142Z" fill="#f0a820" stroke="#665" stroke-width=".6"/>
<use href="#dd" x="390" y="135"/>
<g transform="translate(413,136)" fill="none" stroke="#aaa"><circle cx="3" cy="4" r="5"/><path d="M3-3V11M-4 4H10M-8-3A6 6 0 0 1 2-6" stroke-width="1.500"/></g>
<g transform="translate(444,136)" fill="#ddd" stroke="#aaa"><path d="M-9-5Q-4-9 1-7-2-2-7-1Z"/><rect x="0" y="-3" width="5" height="5"/><rect x="3" y="2" width="5" height="5"/><rect x="3" y="7" width="5" height="4"/></g>
<rect x="470.500" y="127.500" width="19" height="19" fill="none" stroke="#333" stroke-dasharray="2 2"/><circle cx="470" cy="127" r="2" fill="#d33"/><circle cx="489" cy="146" r="2" fill="#d33"/>
<use href="#dd" x="501" y="135"/>
<g transform="translate(528,136)"><path d="M-11 1-2-9 10-3V5L-2 8-11 3Z" fill="#d8d8e0" stroke="#555" stroke-width="1"/><path d="M-8 1-1-5 10-3-2 3Z" fill="#eee" stroke="#777" stroke-width=".6"/><path d="M-5-1-1-3" stroke="#e03030" stroke-width="2"/></g>
<rect x="544.500" y="121.500" width="30" height="30" fill="#c8d7d5" stroke="#a0b8b5"/>
<g transform="translate(560,136)"><polygon points="-9,-6 0,-10 10,-6 0,-2" fill="#8fc8f0" stroke="#3060d0" stroke-width=".6"/><polygon points="-9,-6 0,-2 0,10 -9,6" fill="#58a8ec"/><polygon points="10,-6 0,-2 0,10 10,6" fill="#2080e0"/><path d="M0-10V0L10 6" stroke="#e03030" fill="none"/></g>
<rect x="581.500" y="121.500" width="30.500" height="30" fill="#c8d7d5" stroke="#a0b8b5"/>
<g transform="translate(597,136)"><polygon points="-12,-9 -7,-6 -12,-2" fill="#20b030"/><polygon points="-12,1 -7,5 -12,9" fill="#c83030"/><circle r="6.500" fill="#ddd" stroke="#888"/><polygon points="0,-3 3,0 0,3 -3,0" fill="#f0d020"/><path d="M0-11V-5M0 5V11M-8 0H-5M5 0H10" stroke="#111" stroke-width="2"/></g>
<rect x="612.500" y="121.500" width="30.500" height="30" fill="#c8d7d5" stroke="#a0b8b5"/><path d="M619 145 635 129" stroke="#222"/><circle cx="636" cy="127" r="2.500" fill="#d81818"/>
<rect x="643.500" y="121.500" width="30.500" height="30" fill="#c8d7d5" stroke="#a0b8b5"/><path d="M650 146 668 127" stroke="#222"/><circle cx="658.500" cy="136" r="2.500" fill="#d81818"/>
<path d="M679 124Q689 125 689 134V138Q689 147 699 148" fill="none" stroke="#222"/><circle cx="689" cy="136" r="2.300" fill="#d83030"/>
<rect x="705.500" y="121.500" width="30.500" height="30" fill="#c8d7d5" stroke="#a0b8b5"/><path d="M711 142 718 128 725 145 731 134" fill="none" stroke="#a020d0"/><g fill="#d81818"><circle cx="711" cy="142" r="2"/><circle cx="718" cy="128" r="2"/><circle cx="725" cy="145" r="2"/><circle cx="731" cy="134" r="2"/></g>
<path d="M741 141Q751 126 761 141M751 124V150" fill="none" stroke="#222"/><circle cx="751" cy="133" r="2.200" fill="#d83030"/>
<rect x="767.500" y="121.500" width="30.500" height="30" fill="#c8d7d5" stroke="#a0b8b5"/><circle cx="783" cy="136" r="9.500" fill="none" stroke="#111" stroke-width="1.300"/><circle cx="783" cy="136" r="2" fill="#d81818"/><path d="M783 132V140M779 136H787" stroke="#d81818" stroke-width=".8"/>
<circle cx="813" cy="136" r="9.500" fill="none" stroke="#222"/><g fill="#d83030"><circle cx="813" cy="126" r="2"/><circle cx="813" cy="146" r="2"/><circle cx="803" cy="136" r="2"/><circle cx="823" cy="136" r="2"/></g>
<rect x="829.500" y="121.500" width="30.500" height="30" fill="#c8d7d5" stroke="#a0b8b5"/><path d="M845 126V147M835 136H855" stroke="#111"/><circle cx="845" cy="136" r="2.200" fill="#d81818"/>
<rect x="860.500" y="121.500" width="30.500" height="30" fill="#c8d7d5" stroke="#a0b8b5"/><path d="M867 146 881 127" stroke="#111"/><circle cx="871" cy="140" r="2.400" fill="#d81818"/>
<g transform="translate(906,136)"><path d="M-11-2Q-8-9 0-10L11-8Q3-4 4 4L-4 11Q-10 5-11-2Z" fill="#a6d8f5" stroke="#6aa0d0" stroke-width=".7"/><path d="M4 4 11 5-4 12Z" fill="#ccc"/><circle cx="0" cy="-3" r="1.800" fill="#d83030"/></g>
<g transform="translate(946,136)" fill="none" stroke="#333"><path d="M-9-11 10-7 7 11-8 8ZM-8-5 9-2M-8 1 8 3M-8 5 7 7M-4-10-4 9M1-9-0 10M6-8 4 10"/><circle cx="0" cy="-3" r="2" fill="#d33" stroke="none"/></g>
<rect x="962" y="124" width="24" height="24" fill="#b2b2b2"/><rect x="964.500" y="126.500" width="19" height="19" fill="#eef0ff" stroke="#d84040"/><text x="974" y="144" text-anchor="middle" font-family="Liberation Serif,serif" font-size="20" fill="#3060c8">M</text>
<rect x="993" y="124" width="24" height="24" fill="#b2b2b2"/><g transform="translate(1005,136)"><path d="M-6-6 5-6Q8 0 5 6H-6Q-9 0-6-6Z" fill="#a6a6b6" stroke="#555"/><path d="M-3-6Q-6 0-3 6M1-6Q-2 0 1 6" stroke="#555" fill="none"/><path d="M-7-9H5" stroke="#333"/></g>
<rect x="1024" y="124" width="24" height="24" fill="#b2b2b2"/><text x="1036" y="145" text-anchor="middle" font-size="24" fill="#33f0f0">A</text>
<rect x="1055" y="124" width="24" height="24" fill="#b2b2b2"/><g transform="translate(1067,136)"><use href="#c" transform="scale(.65)" x="-3" y="3"/><path d="M-3-7H6V3" fill="none" stroke="#3030d0" stroke-dasharray="1.500 1"/><path d="M1-9V-5M8-2V2" stroke="#e03030"/></g>

<!-- top separator line -->
<rect y="152" width="1729" height="1.500" fill="#909090"/>

<!-- sidebar -->
<rect y="153.500" width="32" height="678" fill="#d9d9d9"/>
<rect x="31" y="153.500" width="1.300" height="678" fill="#8a8a8a"/>
<g transform="translate(15,166)" fill="none" stroke="#444"><circle r="4.500" stroke-width="1.400"/><circle r="6" stroke-width="1.300" stroke-dasharray="2 2.700"/></g>
<g transform="translate(14,211)"><use href="#y"/></g><g transform="translate(23,222) scale(.75)"><use href="#y"/></g><path d="M11 216V227M11 221H18" stroke="#1020c0" stroke-width="1" fill="none"/><path d="M20 217H29" stroke="#111"/>
<g transform="translate(17,258)"><polygon points="-7,-9 0,-4 -7,1" fill="#1a1acc"/><polygon points="7,-9 0,-4 7,1" fill="#1a1acc"/><rect x="-10" y="3" width="8" height="8" fill="#f8f060" stroke="#888"/><polygon points="2,2 11,11 2,11" fill="#b01818" stroke="#555" stroke-width=".5"/></g>
<path d="M2.500 323V278.500Q2.500 277 4 277H31.500V323Z" fill="#fff" stroke="#999" stroke-width="1"/>
<rect x="31" y="278" width="2" height="44" fill="#fff"/>
<g transform="translate(16,300)"><rect x="-9" y="-10" width="9" height="9" rx="2" fill="#d080b0" stroke="#8a2070" stroke-width=".8"/><path d="M-5 0V10M-5 5H1" stroke="#1020c0" fill="none"/><path d="M3-4H12" stroke="#222"/><circle cx="7" cy="6" r="4" fill="none" stroke="#8a2070"/><circle cx="7" cy="6" r="1.500" fill="#8a2070"/></g>
<g transform="translate(16,345)"><path d="M-10-4-6-8H-2V9H-10Z" fill="#ef8a2a" stroke="#b06010" stroke-width=".6"/><path d="M-3-4 1-8H5V9H-3Z" fill="#2ca840" stroke="#1a7a2a" stroke-width=".6"/><path d="M4-4 8-9H13V7L9 9H4Z" fill="#3a8ae0" stroke="#2060b0" stroke-width=".6"/></g>
<g transform="translate(14,397)"><circle cy="2" r="8" fill="#2a7ae0" stroke="#1a50a8"/><rect x="-1.500" y="-1" width="3" height="7" fill="#fff"/><circle cy="-3" r="1.600" fill="#fff"/><path d="M-2-9A10 10 0 0 1 10-1M0-13A13 13 0 0 1 15 0" fill="none" stroke="#3a8ae0" stroke-width="2"/></g>
<g transform="translate(18,450)"><path d="M-9-10H4L9-5V11H-9Z" fill="#fff" stroke="#2a6ad8" stroke-width="1.100"/><circle cy="2" r="5" fill="#3f9f5f"/><circle cy="2" r="2" fill="#aad0f0"/></g>
<g transform="translate(18,504)"><circle r="10.500" fill="#e8eefa" stroke="#7a7a7a" stroke-width="1.300"/><path d="M0-7V0H6" stroke="#111" stroke-width="1.400" fill="none"/></g>
<rect x="8" y="535" width="8" height="22" fill="url(#rbv)"/><path d="M19 541 26 555" stroke="#111" stroke-width="2.500"/><path d="M14 540H22M18 536V544" stroke="#fff" stroke-width="1.500"/>
<g transform="translate(17,589)"><path d="M-7 10V-9H-1V10Z" fill="#4a8ae0"/><path d="M-9 11H2" stroke="#e0d040" stroke-width="1.500"/><path d="M2-6H13L5-1M4 2H11" fill="none" stroke="#3a7ad0" stroke-width="1.300"/><path d="M3-3 10 9" stroke="#111" stroke-width="2.300"/></g>
<g transform="translate(18,630)"><path d="M-9 7-1-1 6-9M3-11 10-6" stroke="#555" stroke-width="2.500" fill="none"/><path d="M-9 3-3 1 1 5-3 8Z" fill="#8a88a8"/><path d="M-10 9-4 6-3 9-9 11Z" fill="#f08020"/></g>
<g transform="translate(18,673)"><rect x="-3" y="-11" width="14" height="18" fill="#fff" stroke="#444"/><path d="M-11-9-4-11V11L-11 9Z" fill="#ddd" stroke="#777"/><rect x="-1" y="-9" width="10" height="10" fill="#d83030"/><rect x="2" y="-8" width="5" height="7" fill="#cfe4f8"/><rect x="-1" y="1" width="10" height="3" fill="#f5b050"/></g>
<g transform="translate(18,714)"><rect x="-3" y="-9" width="14" height="18" fill="#fff" stroke="#444"/><path d="M-11-7-4-9V11L-11 9Z" fill="#ddd" stroke="#777"/><circle cx="0" cy="-5" r="1.800" fill="#2a6ae0"/><circle cx="0" cy="0" r="1.800" fill="#30a030"/><circle cx="0" cy="5" r="1.800" fill="#d82020"/><path d="M3-5H9M3 0H9M3 5H9" stroke="#666"/></g>

<!-- panel -->
<rect x="32.300" y="153.500" width="383" height="678" fill="#fff"/>
<text class="t" x="42" y="171">部件导航器</text>
<rect x="387" y="164" width="10.500" height="10" fill="#fff" stroke="#222"/><rect x="387" y="164" width="10.500" height="2" fill="#222"/>
<rect x="39" y="182" width="365.500" height="649" fill="url(#rows)"/>
<rect x="39" y="183" width="365.500" height="20" fill="#f0f0f0"/>
<rect x="39" y="202.500" width="365.500" height="1" fill="#dcdcdc"/>
<path d="M39 182.500V831M404.500 182.500V831M39 182H405" stroke="#dcdcdc" stroke-width="1.200" fill="none"/>
<path d="M239.500 183V831M339.500 183V831" stroke="#e4e4e4" stroke-width="1.200"/>
<text class="t" x="46" y="198">名称</text><polygon points="88,196 98,196 93,191" fill="#222"/>
<text class="t" x="246" y="198">最新</text><text class="t" x="346" y="198">附注</text>
<path d="M49.500 213V316M49.500 213H60M53 233H60M53 253H60M53 273H60M53 293H60M68.500 323V413M68.500 333H80M68.500 353H80M68.500 373H80M72 393H80M72 413H80" stroke="#888" stroke-dasharray="1 1.500" fill="none"/>
<use href="#pb" x="49.500" y="234"/><use href="#pb" x="49.500" y="254"/><use href="#pb" x="49.500" y="274"/><use href="#pb" x="49.500" y="294"/><use href="#mb" x="49.500" y="314"/><use href="#pb" x="68.500" y="394"/><use href="#pb" x="68.500" y="414"/>
<g transform="translate(66,213)"><circle r="7" fill="#e8eefa" stroke="#777" stroke-width="1.100"/><path d="M0-4V0H4" stroke="#111" fill="none"/></g>
<text class="t" x="78" y="218">历史记录模式</text>
<g transform="translate(66,234)" fill="none" stroke="#2a9a6a"><path d="M0-7 7-3V4L0 7-7 4V-3ZM-7-3 0 1 7-3M0 1V7M0-7V1"/><path d="M-1 8 8 4" stroke="#e03030" stroke-width="1.200"/></g>
<text class="t" x="78" y="238">模型视图</text>
<use href="#ck" x="67" y="254"/>
<g transform="translate(83,254)"><path d="M-7-3 6-7V4L-5 7Z" fill="#fff" stroke="#e03030"/><circle cx="0" cy="-1" r="3" fill="#3050c8"/><rect x="4" y="-1" width="4" height="4" fill="#222"/></g>
<text class="t" x="94" y="258">摄像机</text>
<use href="#fo" x="67" y="275"/><path d="M67 267H74M67 269.500H74" stroke="#2a3ab0"/><text class="t" x="78" y="278">用户表达式</text>
<use href="#fo" x="67" y="295"/><text class="t" x="78" y="298">组</text>
<use href="#fo" x="67" y="315"/><text class="t" x="78" y="318">模型历史记录</text>
<use href="#cb" x="86" y="334"/><g transform="translate(102,334)" fill="none"><path d="M-6-3 5 2-1 6-6 2ZM-6-7V2M-6 2 2-3" stroke="#444"/><path d="M-6-8V-5" stroke="#22c"/><path d="M1-2 6-4" stroke="#3a3"/><path d="M2 6 6 8" stroke="#c33"/></g>
<text class="t" x="113" y="338">基准坐标系 (0)</text>
<use href="#cb" x="86" y="354"/><g transform="translate(102,354)" fill="#fff" stroke="#222"><rect x="-7" y="-7" width="5" height="6"/><rect x="-7" y="1" width="5" height="6"/><rect x="-1" y="1" width="7" height="6"/><path d="M1-1 6-6" stroke="#e8a030" stroke-width="1.600"/></g>
<text class="t g" x="113" y="358">草图 (1) "SKETCH_0...</text>
<use href="#cb" x="86" y="374"/><g transform="translate(102,374)"><path d="M-7-6Q0-9 7-6V0Q3 2 2 7H-2Q-3 2-7 0Z" fill="#f09a3a"/><path d="M-7-6Q-3-8 0-8V7H-2Q-3 2-7 0Z" fill="#3a64c8"/></g>
<text class="t g" x="113" y="378">旋转 (2)</text>
<use href="#cb" x="86" y="394"/><use href="#fg" x="102" y="395"/>
<text class="t" x="113" y="398">特征组 (93) "gear_3...</text>
<use href="#cb" x="86" y="414"/><use href="#fg" x="102" y="415"/>
<text class="t" x="113" y="418" font-weight="700">特征组 (141) "gear_...</text>
<use href="#ck" x="252" y="334"/><use href="#ck" x="252" y="354"/><use href="#ck" x="252" y="374"/><use href="#ck" x="252" y="394"/><use href="#ck" x="252" y="414"/>

<!-- viewport -->
<rect x="415.500" y="153.500" width="1313.500" height="677.500" fill="url(#vp)"/>
<g fill="#ffa401">
<use href="#teeth" transform="translate(1023.700 609)" stroke="none"/><circle cx="1023.700" cy="609" r="174"/>
<use href="#teeth" transform="translate(1419.500 608.800) rotate(9) scale(.994)" stroke="none"/><circle cx="1419.500" cy="608.800" r="173"/>
</g>
<g fill="none" stroke="#4a4a4a" stroke-width=".9">
<use href="#teeth" transform="translate(1023.700 609)"/>
<use href="#teeth" transform="translate(1419.500 608.800) rotate(9) scale(.994)"/>
</g>
<path d="M1023.700 609V480M1023.700 541.700H1091V609M1023.700 609H1145" fill="none" stroke="#ebbd82" stroke-width="1.400"/>
<polygon points="1023.700,476 1020.500,491 1027,491" fill="#d8d4c8"/>
<polygon points="1157,609 1141,605.500 1141,612.500" fill="#e8e2d4"/>
<text x="1023.700" y="475" font-size="14" text-anchor="middle" fill="#e8c694">Z</text>
<text x="1163.500" y="615" font-size="14" text-anchor="middle" fill="#e8c694">Y</text>
<text x="1023.700" y="614" font-size="13" text-anchor="middle" fill="#e8c694">X</text>
<rect x="741" y="450" width="1" height="1" fill="#666"/><rect x="709" y="482" width="1" height="1" fill="#777"/><rect x="415" y="482" width="1" height="1" fill="#777"/>

<text x="1516" y="823" font-family="Liberation Mono,Noto Sans CJK SC,monospace" font-size="13.300" fill="#8e9092">UG<tspan letter-spacing="2.500" font-size="13.300">爱好者论坛</tspan> WWW.UGSNX.COM</text>
</svg>
</body></html>
